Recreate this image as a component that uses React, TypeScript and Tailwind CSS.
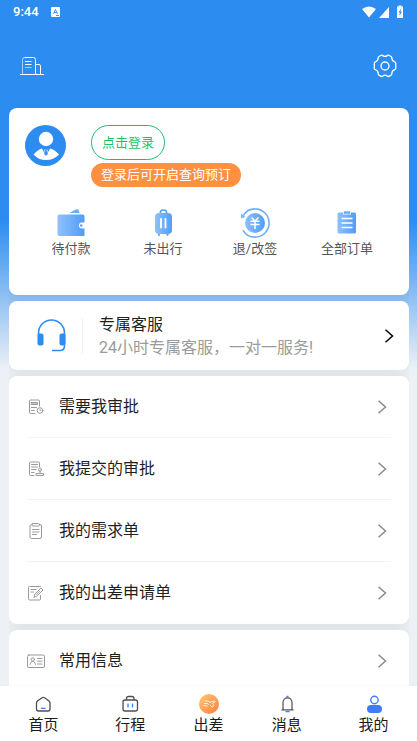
import type { ReactNode } from 'react';

type Item = { label: string; icon: ReactNode };

const GRADIENT_STOPS = (
  <>
    <stop offset="0" stopColor="#8fc1fd" />
    <stop offset="1" stopColor="#509df5" />
  </>
);

function WalletIcon() {
  return (
    <svg width="28" height="28" viewBox="0 0 28 28" aria-hidden="true">
      <defs>
        <linearGradient id="wallet">{GRADIENT_STOPS}</linearGradient>
      </defs>
      <path d="M12.500 4 18.500.6q2-1 3 .2l1.200 3.200Z" fill="#6badf8" />
      <path
        d="M2.500 5.500h23q2 0 2 2v6h-2.500a3 3 0 0 0 0 6h2.500v7.500h-25q-2 0-2-2v-17.500q0-2 2-2Z"
        fill="url(#wallet)"
      />
      <circle cx="24.200" cy="16.500" r="1.200" fill="#509df5" />
    </svg>
  );
}

function SuitcaseIcon() {
  return (
    <svg width="28" height="28" viewBox="0 0 28 28" aria-hidden="true">
      <defs>
        <linearGradient id="suitcase">{GRADIENT_STOPS}</linearGradient>
      </defs>
      <path d="M11.500 5V3.500q0-2.300 2.300-2.300h1.400q2.300 0 2.300 2.300V5" fill="none" stroke="#61a7f7" strokeWidth="1.800" />
      <rect x="6" y="4" width="17" height="21" rx="4" fill="url(#suitcase)" />
      <path d="M9 25h2v1.800H9zM17.500 25h2v1.800h-2z" fill="#61a7f7" />
      <path d="M12 10v8.500M16.500 10v8.500" stroke="#fff" strokeWidth="1.800" strokeLinecap="round" />
    </svg>
  );
}

function RefundIcon() {
  return (
    <svg width="30" height="30" viewBox="0 0 30 30" aria-hidden="true">
      <defs>
        <linearGradient id="refund">{GRADIENT_STOPS}</linearGradient>
      </defs>
      <circle cx="15" cy="15" r="10" fill="url(#refund)" />
      <path
        d="M3 8C6.500 2.300 11 .8 15 .9a14 14 0 0 1 0 28.200c-5 0-9.500-2.300-12-7"
        fill="none"
        stroke="#6fb0f8"
        strokeWidth="1.600"
      />
      <path d="M1 5.500v5l4.500-1.500Z" fill="#7fb8fa" />
      <path
        d="m11.500 9.500 3.500 3.500 3.500-3.500M10.500 13.200h9M10.500 16.500h9M15 13v8"
        fill="none"
        stroke="#fff"
        strokeWidth="1.500"
      />
    </svg>
  );
}

function OrdersIcon() {
  return (
    <svg width="28" height="28" viewBox="0 0 28 28" aria-hidden="true">
      <defs>
        <linearGradient id="orders">{GRADIENT_STOPS}</linearGradient>
      </defs>
      <path
        d="M6 3.500H10V5.500h8V3.500H21.500q1.500 0 1.500 1.500v18q0 1.500-1.500 1.500H6Q4.500 24.500 4.500 23V5q0-1.500 1.500-1.500Z"
        fill="url(#orders)"
      />
      <rect x="10.800" y="2.300" width="6.500" height="2.500" fill="#69abf8" />
      <path d="M8.500 9.500h11M8.500 14h11M8.500 18.500h11" stroke="#fff" strokeWidth="1.500" />
    </svg>
  );
}

function LineIcon({ children }: { children: ReactNode }) {
  return (
    <svg
      width="18"
      height="18"
      viewBox="0 0 18 18"
      fill="none"
      stroke="#9a9a9a"
      strokeLinecap="round"
      strokeLinejoin="round"
      className="shrink-0"
      aria-hidden="true"
    >
      {children}
    </svg>
  );
}

function Chevron({ className }: { className: string }) {
  return (
    <svg
      width="10"
      height="14"
      viewBox="0 0 10 14"
      fill="none"
      stroke="currentColor"
      strokeWidth="1.500"
      className={className}
      aria-hidden="true"
    >
      <path d="m1.500 .8 7 6.200-7 6.200" />
    </svg>
  );
}

const orders: Item[] = [
  { label: '待付款', icon: <WalletIcon /> },
  { label: '未出行', icon: <SuitcaseIcon /> },
  { label: '退/改签', icon: <RefundIcon /> },
  { label: '全部订单', icon: <OrdersIcon /> },
];

const approvals: Item[] = [
  {
    label: '需要我审批',
    icon: (
      <LineIcon>
        <path d="M12.500 8V3q0-1-1-1H3.500q-1 0-1 1v11.500q0 1 1 1H8" />
        <path d="M4.500 4.500h6v2h-6z" fill="#c4c4c4" />
        <path d="M4.500 9.500h5M4.500 12.500H7" />
        <circle cx="13" cy="12.500" r="2.800" />
        <path d="M13 11.200v1.500h.9" strokeWidth=".8" />
      </LineIcon>
    ),
  },
  {
    label: '我提交的审批',
    icon: (
      <LineIcon>
        <path d="M12.500 7V3q0-1-1-1H3.500q-1 0-1 1v11.500q0 1 1 1H7" />
        <path d="M4.500 4.500h6M4.500 7h6M4.500 9.500h4.500M4.500 12.500H7" />
        <circle cx="13" cy="9.500" r="1.500" />
        <path d="M13 11v2M9.500 13.500h7v2h-7z" />
      </LineIcon>
    ),
  },
  {
    label: '我的需求单',
    icon: (
      <LineIcon>
        <path d="M5 2.500H4.500Q3 2.500 3 4v11q0 1.500 1.500 1.500h8.500q1.500 0 1.500-1.500V4q0-1.500-1.500-1.500h-.5" />
        <rect x="5" y="1.500" width="7.500" height="2.500" rx="1" />
        <path d="M5.500 7.500H12M5.500 10H12M5.500 12.500H9.500" />
      </LineIcon>
    ),
  },
  {
    label: '我的出差申请单',
    icon: (
      <LineIcon>
        <path d="M13.500 2.500h-11q-1 0-1 1V15q0 1 1 1h10q1 0 1-1v-3.500" />
        <path d="M4 5.500h5M4 8h2.500M7 13l.8-3 6.200-6 2 2-6.200 6ZM9.500 10.300l3-3" />
      </LineIcon>
    ),
  },
];

const info: Item[] = [
  {
    label: '常用信息',
    icon: (
      <LineIcon>
        <rect x=".5" y="3" width="17" height="12.500" rx="1.500" />
        <circle cx="5.800" cy="7.500" r="1.700" />
        <path d="M3 12.500q.3-3 2.800-3.200Q8 9.500 8.500 12.500M10.500 6.500h4.500M10.500 9.200h4.500M10.500 12h4.500" />
      </LineIcon>
    ),
  },
];

const tabs: Item[] = [
  {
    label: '首页',
    icon: (
      <svg width="20" height="20" viewBox="0 0 20 20" fill="none" aria-hidden="true">
        <path
          d="M3.500 9q0-1.200 1-2L9 3.700q1.300-.8 2.600 0L16 7q1 .8 1 2v6q0 2-2 2H5.500q-2 0-2-2Z"
          stroke="#4d4f54"
          strokeWidth="1.300"
        />
        <path d="M8 14.300h4.500" stroke="#3f7bfa" strokeWidth="1.300" />
      </svg>
    ),
  },
  {
    label: '行程',
    icon: (
      <svg width="20" height="20" viewBox="0 0 20 20" fill="none" aria-hidden="true">
        <rect x="3" y="6" width="14.500" height="11" rx="2" stroke="#4d4f54" strokeWidth="1.300" />
        <path d="M6.500 6V4.500q0-2 2-2h3.500q2 0 2 2V6" stroke="#4d4f54" strokeWidth="1.300" />
        <path d="M8 9.500v4M12.500 9.500v4" stroke="#3f7bfa" strokeWidth="1.300" />
      </svg>
    ),
  },
  {
    label: '出差',
    icon: (
      <svg width="20" height="20" viewBox="0 0 20 20" fill="none" aria-hidden="true">
        <defs>
          <linearGradient id="trip" x1="0" y1="0" x2="1" y2="1">
            <stop offset="0" stopColor="#fdc878" />
            <stop offset="1" stopColor="#fb803c" />
          </linearGradient>
        </defs>
        <circle cx="10" cy="10" r="10" fill="url(#trip)" />
        <path
          d="M5.500 7H9l2 1.500L15 7q1.500-.2 1.200.8L13.500 9.500l1.500 1.700-1 1.800-2-.8-1-1.400M5 9.500h3.500l1 1.200M4.500 11.500l4 .5"
          stroke="#fff"
          strokeWidth=".8"
          strokeLinejoin="round"
        />
      </svg>
    ),
  },
  {
    label: '消息',
    icon: (
      <svg width="20" height="20" viewBox="0 0 20 20" fill="none" aria-hidden="true">
        <path d="M9.500 2.500h2M8.500 17.700h4" stroke="#3f7bfa" strokeWidth="1.300" />
        <path
          d="M6 15.500V8.300a4.500 4.500 0 0 1 9 0v7.200M4.500 15.800h12"
          stroke="#4d4f54"
          strokeWidth="1.200"
        />
      </svg>
    ),
  },
  {
    label: '我的',
    icon: (
      <svg width="20" height="20" viewBox="0 0 20 20" fill="none" aria-hidden="true">
        <circle cx="10.500" cy="6" r="3.700" stroke="#3f7bfa" strokeWidth="1.400" />
        <rect x="3" y="11" width="15" height="8" rx="4" fill="#3f7bfa" />
      </svg>
    ),
  },
];

function StatusBar() {
  return (
    <div className="flex h-6 items-center px-[13px] text-white">
      <span className="text-[13px] font-medium">9:44</span>
      <svg width="9" height="10" viewBox="0 0 9 10" className="ml-3" aria-hidden="true">
        <rect width="9" height="10" rx="1" fill="#fff" />
        <path d="M2.500 7 4.500 2.500 6.500 7M3.200 5.500h2.600M5 8.500h3" fill="none" stroke="#2c8cf0" strokeWidth=".9" />
      </svg>
      <svg width="42" height="14" viewBox="0 0 42 14" className="ml-auto" fill="#fff" aria-hidden="true">
        <path d="M0 4Q7-1 14 4L7 12.500Z" />
        <path d="M27 2v11H17Z" />
        <path d="M35 1.500H36.500V.5h3v1H41V13h-6Z" />
        <path d="m39.200 3.500-2.800 4h1.500L37.200 11 40 6.700h-1.500Z" fill="#2c8cf0" />
      </svg>
    </div>
  );
}

function Header() {
  return (
    <header className="flex h-[84px] items-center justify-between px-5 text-white">
      <button type="button" aria-label="企业">
        <svg width="24" height="20" viewBox="0 0 24 20" fill="none" stroke="currentColor" aria-hidden="true">
          <path d="M0 18.500h24" />
          <path d="M2.500 18V3.500q0-2 2-2" strokeOpacity=".6" />
          <path d="M4.500 1.500h9q2 0 2 2V18M15.500 8.500H19q1.500 0 1.500 1.500v8M5 5.500h6.500M5 8.500h6.500" />
          <path d="M5 11.500h6.500" strokeOpacity=".6" />
        </svg>
      </button>
      <button type="button" aria-label="设置">
        <svg width="24" height="24" viewBox="0 0 24 24" fill="none" stroke="currentColor" strokeWidth="1.300" aria-hidden="true">
          <path
            strokeLinejoin="round"
            d="M8.200 1.200Q9.200.9 9.700 1.600 12 3.200 14.300 1.600q.5-.7 1.500-.4l2.300 1.300q.8.600.7 1.500.1 2.800 2.800 3.900.9.200 1.100 1.100v5.600q-.2.900-1.100 1.100-2.700 1.100-2.800 3.900.1.900-.7 1.500l-2.300 1.300q-1 .3-1.500-.4-2.300-1.600-4.600 0-.5.700-1.500.4l-2.300-1.300q-.8-.6-.7-1.500-.1-2.800-2.800-3.900-.9-.2-1.100-1.100V9q.2-.9 1.100-1.100Q5.100 6.800 5.200 4q-.1-.9.700-1.500Z"
          />
          <circle cx="12" cy="12" r="4" />
        </svg>
      </button>
    </header>
  );
}

function ProfileCard() {
  return (
    <section className="min-h-[187px] shrink-0 rounded-lg bg-white px-4 pt-[17px] shadow-[0_0_12px_rgba(0,0,0,0.08)]">
      <div className="flex items-start gap-[25px]">
        <svg width="41" height="41" viewBox="0 0 41 41" className="shrink-0" aria-hidden="true">
          <circle cx="20.500" cy="20.500" r="20.500" fill="#2c8cf0" />
          <circle cx="21" cy="14" r="7.200" fill="#fff" />
          <path d="M8.500 29.500Q13 24.500 17 23.500l3 5.500-1-4.500h4l-1 4.500 3-5.500q4.500 1 9 6-5.500 5.500-13 5.500t-12.500-5.500Z" fill="#fff" />
          <path d="m19 24.500 2 1.500 2-1.500M20.500 26l-1 3 1.500 1.500 1.500-1.500-1-3" fill="#2c8cf0" stroke="#2c8cf0" strokeWidth=".5" />
        </svg>
        <div className="flex flex-col items-start gap-[3px]">
          <button
            type="button"
            className="h-[35px] rounded-full border border-[#1dbf6b] px-[10px] text-[13px] text-[#1dbf6b]"
          >
            点击登录
          </button>
          <p className="rounded-full bg-[#ff9040] px-[10px] text-[13px] leading-6 text-white">
            登录后可开启查询预订
          </p>
        </div>
      </div>
      <ul className="mt-5 grid grid-cols-4">
        {orders.map(({ label, icon }) => (
          <li key={label}>
            <button type="button" className="flex w-full flex-col items-center text-[13px] leading-5 text-[#555]">
              <span className="flex h-8 items-center">{icon}</span>
              {label}
            </button>
          </li>
        ))}
      </ul>
    </section>
  );
}

function ServiceCard() {
  return (
    <button
      type="button"
      className="flex h-[69px] shrink-0 items-center rounded-lg bg-white pr-[15px] pl-7 text-left shadow-[0_0_12px_rgba(0,0,0,0.08)]"
    >
      <svg width="29" height="33" viewBox="0 0 29 33" fill="none" className="shrink-0" aria-hidden="true">
        <path d="M1.500 16v-2a13 13 0 0 1 26 0v13q0 4.500-4.500 4.500h-8" stroke="#2c8cf0" strokeWidth="1.600" />
        <rect x=".5" y="14.500" width="6" height="12" rx="2" fill="#2c8cf0" />
        <rect x="22.500" y="14.500" width="6" height="12" rx="2" fill="#2c8cf0" />
      </svg>
      <span className="ml-4 h-9 w-px bg-[#f0f0f0]" />
      <span className="ml-4 flex flex-1 flex-col">
        <span className="text-base leading-6 text-[#1f1f1f]">专属客服</span>
        <span className="text-base leading-[22px] text-[#9a9a9a]">24小时专属客服，一对一服务!</span>
      </span>
      <Chevron className="text-black" />
    </button>
  );
}

function MenuCard({ items, label }: { items: Item[]; label: string }) {
  return (
    <nav
      aria-label={label}
      className="shrink-0 rounded-lg bg-white px-[18px] pb-px shadow-[0_0_12px_rgba(0,0,0,0.08)]"
    >
      <ul className="divide-y divide-[#f3f3f3]">
        {items.map((item) => (
          <li key={item.label}>
            <a href="#" className="flex h-[61px] items-center text-base text-[#1f1f1f]">
              {item.icon}
              <span className="ml-[14px] flex-1">{item.label}</span>
              <Chevron className="mr-1 text-[#8a8a8a]" />
            </a>
          </li>
        ))}
      </ul>
    </nav>
  );
}

function TabBar() {
  return (
    <nav aria-label="主导航" className="z-10 grid shrink-0 grid-cols-[5fr_5fr_4fr_5fr_5fr] bg-white pt-2 pb-[5px] shadow">
      {tabs.map(({ label, icon }) => (
        <a
          key={label}
          href="#"
          aria-current={label === '我的' ? 'page' : undefined}
          className="flex flex-col items-center text-[15px] leading-[22px] text-[#1a1a1a]"
        >
          {icon}
          {label}
        </a>
      ))}
    </nav>
  );
}

export default function App() {
  return (
    <div className="flex h-screen flex-col bg-[#edf1f6] bg-linear-[180deg,#2c8cf0_0px,#2c8cf0_220px,#edf1f6_370px] font-[Roboto,'Noto_Sans_CJK_SC',sans-serif]">
      <StatusBar />
      <Header />
      {/* card shadows only show between the cards, the side gutters stay clean */}
      <main className="mr-2 ml-[9px] flex min-h-0 flex-1 flex-col gap-[6px] overflow-hidden">
        <ProfileCard />
        <ServiceCard />
        <MenuCard items={approvals} label="审批" />
        <MenuCard items={info} label="信息" />
      </main>
      <TabBar />
    </div>
  );
}
